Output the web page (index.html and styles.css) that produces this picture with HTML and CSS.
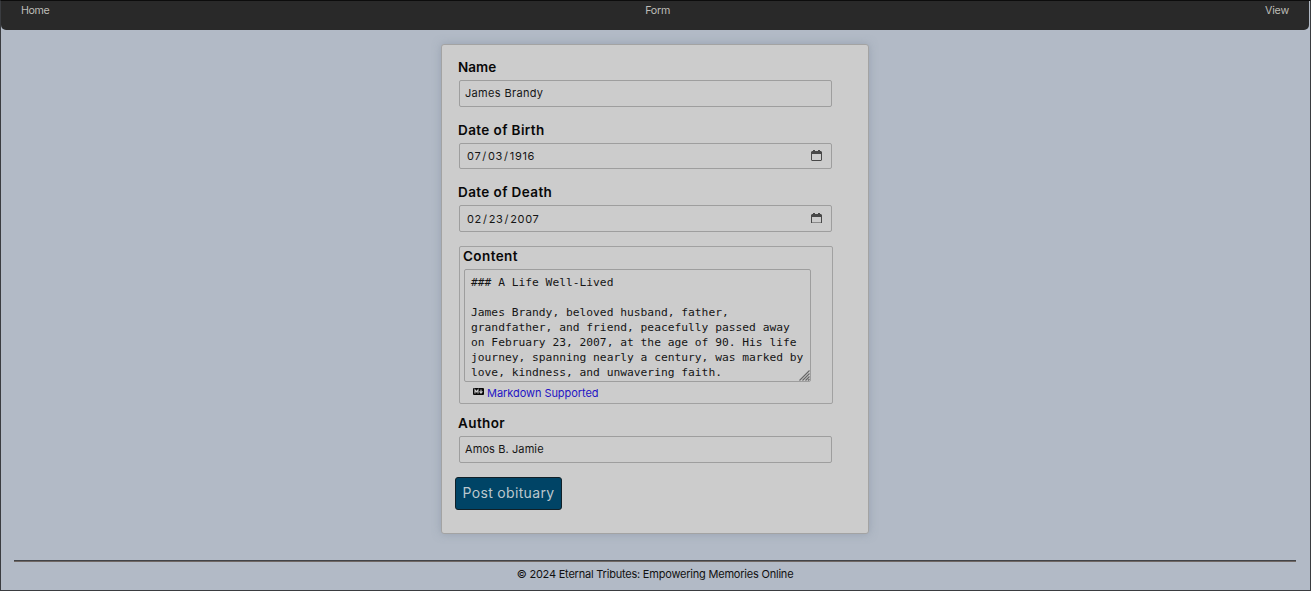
FILE: index.html
```html
<!DOCTYPE html>
<html lang="en-US">
<head>
<meta charset="utf-8">
<title>Eternal Tributes</title>
<link rel="stylesheet" href="styles.css">
</head>
<body>
<nav class="nav"><a class="home">Home</a><a class="form-link">Form</a><a class="view">View</a></nav>
<main>
<form class="card">
<div class="field name"><label for="name">Name</label><input id="name" type="text" value="James Brandy"></div>
<div class="field birth"><label for="birth">Date of Birth</label><input id="birth" type="date" value="1916-07-03">
<svg class="calendar" width="11" height="11" viewBox="0 0 11 11"><path d="M2 0h2v1h3V0h2v1h1l1 1v8l-1 1H1L0 10V2L1 1h1zM1 4v6h9V4z" fill="#484848" fill-rule="evenodd"/></svg></div>
<div class="field death"><label for="death">Date of Death</label><input id="death" type="date" value="2007-02-23">
<svg class="calendar" width="11" height="11" viewBox="0 0 11 11"><path d="M2 0h2v1h3V0h2v1h1l1 1v8H0V2L1 1h1zM1 4v5.4h9V4z" fill="#484848" fill-rule="evenodd"/></svg></div>
<div class="content-box">
<label for="content">Content</label>
<div class="editor">
<textarea id="content">### A Life Well-Lived

James Brandy, beloved husband, father, grandfather, and friend, peacefully passed away on February 23, 2007, at the age of 90. His life journey, spanning nearly a century, was marked by love, kindness, and unwavering faith.</textarea>
<svg class="grip" width="11" height="11" viewBox="0 0 11 11"><path d="M.5 10.5l10-10M3.5 10.5l7-7M6.5 10.5l4-4M9 10.5L10.5 9" stroke="#666" stroke-width="1.1"/></svg>
</div>
<div class="markdown">
<svg width="11" height="7" viewBox="0 0 11 7"><rect width="11" height="7" rx="1" fill="#080808"/><path d="M2 5.5V1.8L3.5 3.8L5 1.8V5.5M8 1.5V4.8M6.5 3.4L8 5.1L9.5 3.4" fill="none" stroke="#ccc" stroke-width="1.1"/></svg>
<a>Markdown Supported</a>
</div>
</div>
<div class="field author"><label for="author">Author</label><input id="author" type="text" value="Amos B. Jamie"></div>
<button type="button">Post obituary</button>
</form>
</main>
<footer><p>© 2024 Eternal Tributes: Empowering Memories Online</p></footer>
</body>
</html>
```
FILE: styles.css
```css
* { box-sizing: border-box; }
body {
  margin: 0;
  height: 591px;
  overflow: hidden;
  display: flex;
  flex-direction: column;
  background: #b2bac6;
  border: 1px solid #3a3c40;
  border-top-color: #0c0c0c;
  font: 11px/14px Inter, sans-serif;
  color: #111;
}
.nav {
  height: 29px;
  flex: none;
  margin-right: 1px;
  padding: 3px 20px 0;
  display: flex;
  justify-content: space-between;
  background: #292929;
  border-radius: 0 0 5px 5px;
  color: #bdbdb8;
  font-size: 10.7px;
  letter-spacing: -.2px;
}
.home { letter-spacing: -.4px; }
.form-link { margin-left: 1px; }
.card {
  width: 428px;
  height: 490px;
  margin: 14px 0 0 440px;
  padding: 13px 16px;
  display: flex;
  flex-direction: column;
  background: #ccc;
  border: 1px solid #a3a3a3;
  border-radius: 3px;
  box-shadow: 0 0 8px rgba(125, 140, 155, .5);
}
label {
  display: block;
  height: 18px;
  font-size: 13.5px;
  line-height: 18px;
  font-weight: 600;
  letter-spacing: .4px;
  color: #080808;
}
.name label { letter-spacing: 0; }
input, textarea {
  display: block;
  background: #ccc;
  border: 1px solid #9e9e9e;
  border-radius: 2px;
  color: #151515;
  outline: 0;
}
input {
  width: 373px;
  height: 27px;
  margin: 4px 0 0 1px;
  padding: 0 5px 1px;
  font: 11px/14px Inter, sans-serif;
  letter-spacing: .33px;
}
.field { position: relative; height: 63px; flex: none; }
.birth, .death { height: 62px; }
.birth input { height: 26px; }
.birth input, .death input { padding: 0 5px 0 6px; letter-spacing: .68px; }
input::-webkit-calendar-picker-indicator { display: none; }
.calendar { position: absolute; left: 353px; top: 29px; }
.death .calendar { top: 30px; }
.content-box {
  width: 374px;
  height: 158px;
  flex: none;
  margin: 1px 0 0 1px;
  padding: 0 4px;
  border: 1px solid #a1a1a1;
  border-radius: 2px;
}
.content-box label { margin-left: -1px; }
.editor { position: relative; width: 347px; margin-top: 4px; }
.grip { position: absolute; right: 1px; bottom: 1px; }
textarea {
  width: 347px;
  height: 113px;
  margin: 0;
  padding: 5px 5px 5px 6px;
  overflow: hidden;
  resize: none;
  font: 11.28px/15px "DejaVu Sans Mono", monospace;
}
.markdown {
  display: flex;
  gap: 3px;
  margin: 4px 0 0 9px;
  color: #2414c4;
  letter-spacing: -.06px;
}
.markdown svg { margin-top: 2px; }
.author { margin-top: 10px; }
.author input { letter-spacing: .1px; }
button {
  width: 107px;
  height: 33px;
  flex: none;
  margin-left: -3px;
  padding: 0 0 1px;
  background: #004466;
  border: 1px solid #102028;
  border-radius: 3px;
  color: #bcc8ce;
  font: 14px/18px Inter, sans-serif;
  letter-spacing: .33px;
}
footer {
  margin: 26px 14px 0 13px;
  border-top: 1px solid #424448;
}
footer p {
  margin: 0;
  padding-top: 5px;
  border-top: 1px solid #706864;
  text-align: center;
  letter-spacing: -.21px;
}
```
